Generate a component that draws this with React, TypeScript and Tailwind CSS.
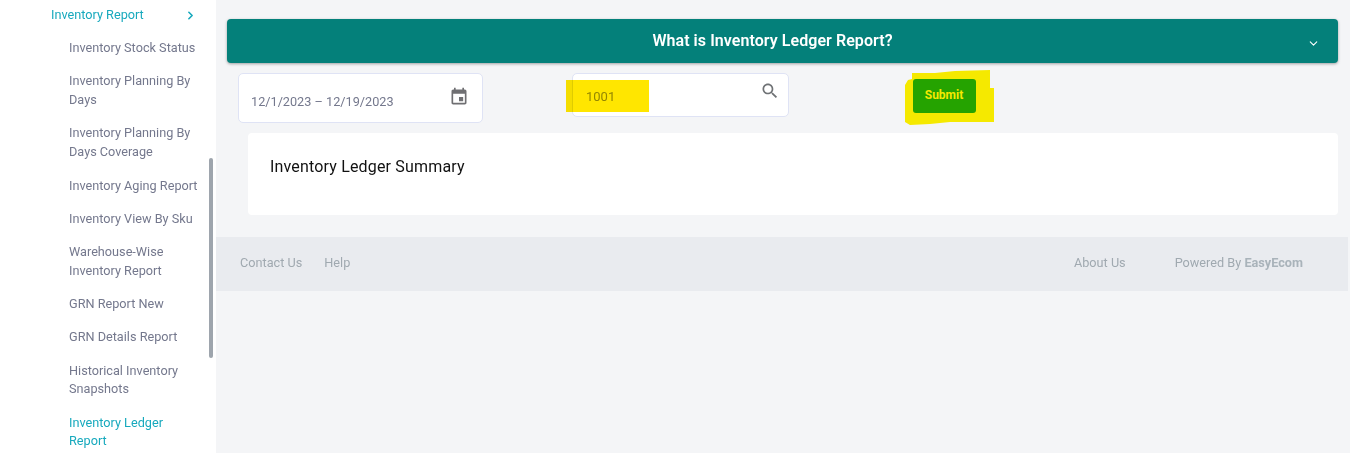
import { ChevronDown, ChevronRight } from "lucide-react";

const REPORTS: { label: string; active?: boolean }[] = [
  { label: "Inventory Stock Status" },
  { label: "Inventory Planning By Days" },
  { label: "Inventory Planning By Days Coverage" },
  { label: "Inventory Aging Report" },
  { label: "Inventory View By Sku" },
  { label: "Warehouse-Wise Inventory Report" },
  { label: "GRN Report New" },
  { label: "GRN Details Report" },
  { label: "Historical Inventory Snapshots" },
  { label: "Inventory Ledger Report", active: true },
];

function Sidebar() {
  return (
    <aside className="relative w-[216px] h-[453px] shrink-0 overflow-hidden bg-white text-[12.7px] leading-[18.85px]">
      <div className="flex items-center pt-[5.5px] pl-[51px] pr-[19px] justify-between text-[#17a9bd]">
        <span>Inventory Report</span>
        <ChevronRight size={13} strokeWidth={3} className="mt-[2px]" />
      </div>
      <ul className="flex flex-col gap-[14.4px] pt-[14.8px] pl-[69px] pr-[16px]">
        {REPORTS.map((r) => (
          <li key={r.label} className={r.active ? "text-[#17a9bd]" : "text-[#74788d]"}>
            {r.label}
          </li>
        ))}
      </ul>
      {/* scrollbar thumb */}
      <div className="absolute left-[209px] top-[158px] w-[4px] h-[200px] rounded-[2px] bg-[#9ea5ad]" />
    </aside>
  );
}

function Filters() {
  return (
    <div className="flex items-start h-[60px] pt-[10px] pl-[22px]">
      <div className="w-[245px] h-[50px] flex justify-between bg-white border border-[#dfe3f5] rounded-[5px] pl-[12px] pr-[13px]">
        <span className="pt-[18.5px] text-[12.7px] leading-[18px] text-[#74788d]">12/1/2023 – 12/19/2023</span>
        <svg width="20" height="20" viewBox="0 0 24 24" fill="#6f6f72" className="mt-[13px]">
          <path d="M17 12h-5v5h5v-5zM16 1v2H8V1H6v2H5c-1.11 0-1.99.9-1.99 2L3 19c0 1.1.89 2 2 2h14c1.1 0 2-.9 2-2V5c0-1.1-.9-2-2-2h-1V1h-2zm3 18H5V8h14v11z" />
        </svg>
      </div>
      <div className="relative ml-[89px] w-[217px] h-[44px] flex justify-between bg-white border border-[#dfe3f5] rounded-[5px] pl-[13px] pr-[8px]">
        <span className="pt-[14px] text-[13px] leading-[18px] text-[#94969c]">1001</span>
        <svg width="20" height="20" viewBox="0 0 24 24" fill="#6f7275" className="mt-[7px]">
          <path d="M15.5 14h-.79l-.28-.27C15.41 12.59 16 11.11 16 9.5 16 5.91 13.09 3 9.5 3S3 5.91 3 9.5 5.91 16 9.5 16c1.61 0 3.09-.59 4.23-1.57l.27.28v.79l5 4.99L20.49 19l-4.99-5zm-6 0C7.01 14 5 11.99 5 9.5S7.01 5 9.5 5 14 7.01 14 9.5 11.99 14 9.5 14z" />
        </svg>
        {/* marker highlight */}
        <div className="absolute left-[-7px] top-[6px] w-[83px] h-[32px] bg-[#ffe600] mix-blend-multiply" />
      </div>
      <div className="relative ml-[124px] mt-[6px]">
        {/* marker scribble around the button */}
        <svg width="90" height="56" viewBox="0 0 90 56" fill="#f5e900" className="absolute left-[-8px] top-[-9px]">
          <path d="M7 3L30 3L50 1L85 0L85 18L89 18L89 52L45 52L25 54L5 55L0 52L0 15L3 10L7 9Z" />
        </svg>
        <button className="relative block w-[63px] h-[34px] pb-[2px] pr-[1px] rounded-[3px] bg-[#25a300] text-[12px] font-bold text-[#f5e900]">
          Submit
        </button>
      </div>
    </div>
  );
}

function Footer() {
  return (
    <footer className="flex items-center justify-between h-[54px] mt-[22px] w-[1132px] pl-[24px] pr-[45px] pb-[2px] bg-[#e9ebef] text-[12.7px] text-[#a0a9b0]">
      <div className="flex gap-[22px]">
        <span>Contact Us</span>
        <span>Help</span>
      </div>
      <div className="flex gap-[49px]">
        <span>About Us</span>
        <span>
          Powered By <b className="font-bold text-[#a9b3ba]">EasyEcom</b>
        </span>
      </div>
    </footer>
  );
}

export default function App() {
  return (
    <div className="flex h-[453px] w-[1350px] overflow-hidden bg-[#f4f5f7] font-['Roboto',sans-serif]">
      <Sidebar />
      <main className="flex-1 min-w-0 pt-[19px]">
        <div className="ml-[11px] mr-[12px] relative flex items-center justify-center h-[44px] pr-[20px] rounded-[4px] bg-[#04807a] shadow-[0_1px_3px_rgba(0,0,0,0.35)] text-[16px] tracking-[0.06px] font-semibold text-white">
          What is Inventory Ledger Report?
          <ChevronDown size={13} strokeWidth={2} className="absolute right-[18px] top-[18px]" />
        </div>
        <Filters />
        <section className="ml-[32px] mr-[12px] mt-[10px] h-[82px] rounded-[4px] bg-white pl-[22px] pt-[24px] text-[16px] leading-[20px] tracking-[0.17px] text-[#111111]">
          Inventory Ledger Summary
        </section>
        <Footer />
      </main>
    </div>
  );
}
